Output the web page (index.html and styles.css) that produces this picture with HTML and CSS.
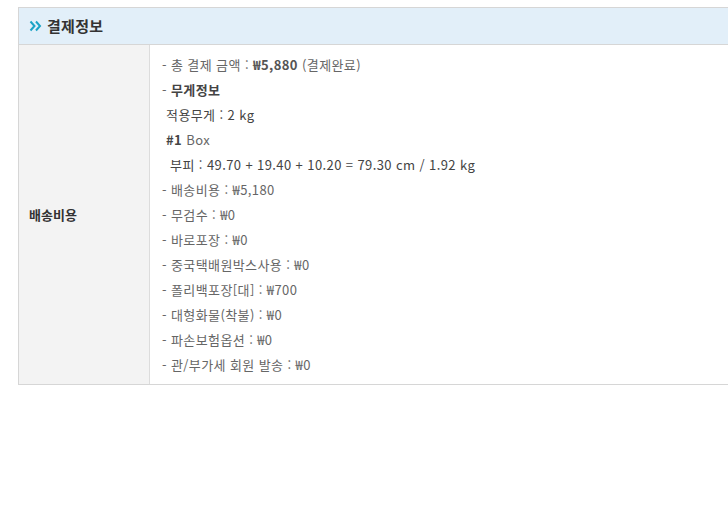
FILE: index.html
```html
<!DOCTYPE html>
<html lang="ko">
<head>
<meta charset="utf-8">
<link rel="stylesheet" href="styles.css">
</head>
<body>
<div class="box">
  <div class="head">
    <svg class="chev" width="13" height="12" viewBox="0 0 13 12"><polyline points="1.5,1.5 5.5,6 1.5,10.5" fill="none" stroke="#1ba3c6" stroke-width="2"/><polyline points="7,1.5 11,6 7,10.5" fill="none" stroke="#1ba3c6" stroke-width="2"/></svg>
    <h2 class="title">결제정보</h2>
  </div>
  <div class="row">
    <div class="label">배송비용</div>
    <div class="cell">
      <div class="line">- 총 결제 금액 : <b>₩5,880</b> (결제완료)</div>
      <div class="line"><span>- </span><b class="dark">무게정보</b></div>
      <div class="line dark">&nbsp;적용무게 : 2 kg</div>
      <div class="line">&nbsp;<b class="dark">#1</b> Box</div>
      <div class="line dark">&nbsp;&nbsp;부피 : 49.70 + 19.40 + 10.20 = 79.30 cm / 1.92 kg</div>
      <div class="line">- 배송비용 : ₩5,180</div>
      <div class="line">- 무검수 : ₩0</div>
      <div class="line">- 바로포장 : ₩0</div>
      <div class="line">- 중국택배원박스사용 : ₩0</div>
      <div class="line">- 폴리백포장[대] : ₩700</div>
      <div class="line">- 대형화물(착불) : ₩0</div>
      <div class="line">- 파손보험옵션 : ₩0</div>
      <div class="line">- 관/부가세 회원 발송 : ₩0</div>
    </div>
  </div>
</div>
</body>
</html>
```
FILE: styles.css
```css
html, body {
  margin: 0;
  padding: 0;
  background: #fff;
  overflow: hidden;
}
body {
  font-family: "Noto Sans CJK KR", "Noto Sans", sans-serif;
  font-size: 13px;
  color: #666;
}
.box {
  margin: 7px 0 0 18px;
  border: 1px solid #d6d6d6;
  border-right: none;
}
.head {
  height: 36px;
  background: #e2eff9;
  border-bottom: 1px solid #d6d6d6;
  display: flex;
  align-items: center;
  padding-left: 10px;
  gap: 5px;
}
.chev {
  display: block;
}
.title {
  margin: 0;
  font-size: 15px;
  font-weight: bold;
  color: #333;
  line-height: 20px;
  letter-spacing: 0.3px;
}
.row {
  display: flex;
}
.label {
  width: 120px;
  flex: none;
  background: #f3f3f3;
  border-right: 1px solid #dcdcdc;
  padding-left: 10px;
  display: flex;
  align-items: center;
  font-weight: bold;
  color: #333;
  font-size: 13px;
}
.cell {
  padding: 7px 0 7px 12px;
  letter-spacing: 0.4px;
}
.line {
  line-height: 25px;
  white-space: nowrap;
}
b {
  color: #555;
}
.dark {
  color: #444;
}
```
